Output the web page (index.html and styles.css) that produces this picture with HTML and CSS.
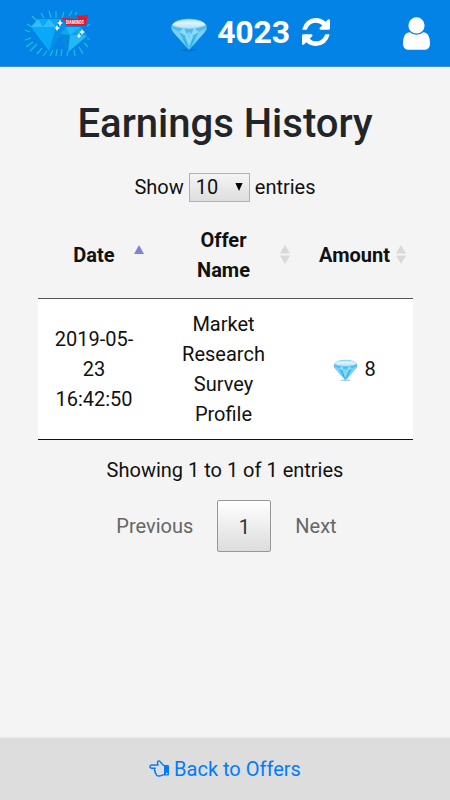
FILE: index.html
```
<!DOCTYPE html>
<html lang="en">
<head>
<meta charset="utf-8">
<title>Earnings History</title>
<link rel="stylesheet" href="styles.css">
</head>
<body>
<svg width="0" height="0" class="defs" aria-hidden="true">
  <defs>
    <linearGradient id="gemTop" x1="0" y1="0" x2="0" y2="1"><stop offset="0" stop-color="#9edcf6"/><stop offset=".4" stop-color="#e0f5fd"/><stop offset="1" stop-color="#a9def7"/></linearGradient>
    <linearGradient id="gemBody" x1="0" y1="0" x2="0" y2="1"><stop offset="0" stop-color="#68b9ed"/><stop offset=".55" stop-color="#43bdf1"/><stop offset="1" stop-color="#0aa6df"/></linearGradient>
    <symbol id="gem" viewBox="0 0 38 34">
      <ellipse cx="19" cy="32" rx="8" ry="1.3" fill="#07559b" opacity=".3"/>
      <path d="M1 9Q3 2 19 1Q35 2 37 9Q37 12 35 14L19 32L3 14Q1 12 1 9Z" fill="url(#gemBody)"/>
      <path d="M2 7Q5 1.500 19 1Q33 1.500 36 7Q32 10 19 11Q6 10 2 7Z" fill="url(#gemTop)" stroke="#71bdf0" stroke-width=".6"/>
      <path d="M2 10L9 14L19 32L4 15ZM36 10L29 14L19 32L34 15Z" fill="#b8e9fc" opacity=".45"/>
      <path d="M9 14L14 10L18 19ZM20 19L24 10L29 14ZM19 32L15 19L19 13L23 19Z" fill="#b9f0ff" opacity=".6"/>
      <path d="M10 15L15 20L19 29M28 15L23 20L19 29M19 12V20" fill="none" stroke="#218fd2" stroke-width=".6" opacity=".5"/>
    </symbol>
  </defs>
</svg>
<header class="topbar">
  <svg class="logo" viewBox="0 0 68 48">
    <path class="rays" d="M14 11L9 6M21 8L18 3M28 8L26 1M33 8V1M39 8L41 2M46 6L49 1M52 5L54 2M9 17L4 14M7 22L2 20M8 28L2 30M10 32L3 37M14 34L7 41M19 38L14 44M24 41L20 46M30 40L27 46M34 39L33 46M39 39L38 46M45 41L44 46M51 40L52 46M56 37L60 44M61 33L65 37M64 29H67M64 16L67 14"/>
    <path fill="#08aaf8" d="M8 17L15 9H36L44 17L26 41Z"/>
    <path fill="#32bcfa" d="M15 9L20 17H8ZM26 9L33 17H20Z"/>
    <path fill="#078ee9" d="M36 9L44 17L26 41L33 17Z"/>
    <path fill="#0ba6ef" d="M37 24L43 17H58L64 26L45 42Z"/>
    <path fill="#20b9f5" d="M43 17L47 25L58 17ZM47 25L45 42L64 26Z"/>
    <path fill="#0789da" d="M37 24L47 25L45 42Z"/>
    <path fill="#e3172d" d="M38 8L55 9L64 9L63 16L43 15L42 11ZM53 6L65 5L64 9L56 9Z"/>
    <text x="43" y="13.900" class="ribbon" textLength="18" lengthAdjust="spacingAndGlyphs">DIAMONDS</text>
    <path fill="#fff" d="M37 9L38 12L40 13L38 14L37 17L36 14L34 13L36 12ZM34 15L35 17L37 18L35 19L34 21L33 19L32 18L33 17ZM59 19L60 21L62 22L60 23L59 25L58 23L56 22L58 21ZM56 23L57 25L58 26L57 27L56 28L55 27L54 26L55 25Z"/>
  </svg>
  <div class="balance">
    <svg class="gem-lg"><use href="#gem"/></svg>
    <strong>4023</strong>
    <svg class="refresh" viewBox="0 128 1536 1536"><path fill="currentColor" d="M1511 1056q0 5-1 7-64 268-268 434.500t-478 166.500q-146 0-282.500-55t-243.500-157l-129 129q-19 19-45 19t-45-19-19-45v-448q0-26 19-45t45-19h448q26 0 45 19t19 45-19 45l-137 137q71 66 161 102t187 36q134 0 250-65t186-179q11-17 53-117 8-23 30-23h192q13 0 22.500 9.500t9.500 22.500zm25-800v448q0 26-19 45t-45 19h-448q-26 0-45-19t-19-45 19-45l138-138q-148-137-349-137-134 0-250 65t-186 179q-11 17-53 117-8 23-30 23h-199q-13 0-22.500-9.500t-9.500-22.500v-7q65-268 270-434.500t480-166.500q146 0 284 55.500t245 156.500l130-129q19-19 45-19t45 19 19 45z"/></svg>
  </div>
  <svg class="user" viewBox="256 128 1280 1536"><path fill="currentColor" d="M1536 1399q0 109-62.500 187t-150.500 78h-854q-88 0-150.500-78t-62.500-187q0-85 8.500-160.500t31.500-152 58.500-131 94-89 134.500-34.500q131 128 313 128t313-128q76 0 134.500 34.500t94 89 58.500 131 31.500 152 8.500 160.500zm-256-887q0 159-112.500 271.500t-271.500 112.500-271.500-112.500-112.500-271.500 112.500-271.500 271.500-112.500 271.500 112.500 112.500 271.500z"/></svg>
</header>
<main>
  <h1>Earnings History</h1>
  <div class="length">Show <span class="select">10<svg viewBox="0 0 8 9"><path d="M0 0H8L4 9Z"/></svg></span> entries</div>
  <table>
    <colgroup><col class="c-date"><col class="c-offer"><col class="c-amount"></colgroup>
    <thead><tr>
      <th><div class="head">Date<svg class="sort" viewBox="0 0 10 19"><path fill="#8080e0" d="M0 9L5 0L10 9Z"/></svg></div></th>
      <th><div class="head">Offer<br>Name<svg class="sort" viewBox="0 0 10 19"><path fill="#d9d9d9" d="M0 8.500L5 0L10 8.500ZM0 10.500H10L5 19Z"/></svg></div></th>
      <th><div class="head">Amount<svg class="sort" viewBox="0 0 10 19"><path fill="#d9d9d9" d="M0 8.500L5 0L10 8.500ZM0 10.500H10L5 19Z"/></svg></div></th>
    </tr></thead>
    <tbody><tr>
      <td>2019-05-<br>23<br>16:42:50</td>
      <td>Market<br>Research<br>Survey<br>Profile</td>
      <td><span class="amount"><svg class="gem-sm" viewBox="0 0 38 34"><use href="#gem" width="38" height="34"/></svg>8</span></td>
    </tr></tbody>
  </table>
  <div class="info">Showing 1 to 1 of 1 entries</div>
  <nav class="pager"><span>Previous</span><span class="current">1</span><span>Next</span></nav>
</main>
<footer>
  <a><svg class="hand" viewBox="0 0 20 17"><path fill="none" stroke="currentColor" stroke-width="1.400" stroke-linejoin="round" d="M15 5.500C12.500 5 11.800 1 9.800 .9C8 .9 8.300 3 9 5H3C.2 5 .2 8.200 3 8.200H6.200C5 9.200 5.300 10.800 6.300 11.200C5.700 12.500 6.200 13.500 7.200 13.800C7.100 15.500 8.200 16 10 16C12.500 16 13 14.800 15 14.600"/><path fill="currentColor" fill-rule="evenodd" d="M15 5H19Q20 5 20 6V14.500Q20 15.500 19 15.500H15ZM17.700 12.800a.8 .8 0 1 0 .01 0Z"/></svg>Back to Offers</a>
</footer>
</body>
</html>
```
FILE: styles.css
```
* { box-sizing: border-box; }
body {
  margin: 0;
  height: 800px;
  display: flex;
  flex-direction: column;
  background: #f4f4f4;
  color: #212529;
  font: 20px/30px Roboto, "Liberation Sans", sans-serif;
  text-align: center;
}
svg { display: block; }
.defs { position: absolute; }
.topbar {
  height: 67px;
  flex: none;
  display: flex;
  align-items: flex-start;
  justify-content: space-between;
  padding: 0 20px 0 23px;
  background: #0383e6;
  border-bottom: 1px solid #3d8fe3;
  color: #fff;
}
.logo { width: 68px; height: 48px; margin-top: 10px; overflow: visible; }
.rays { stroke: #17c3d4; stroke-width: 1.200; fill: none; }
.ribbon { font: bold 4.500px Roboto, sans-serif; fill: #fff; }
.balance { display: flex; margin-left: 6px; }
.gem-lg { width: 38px; height: 34px; margin-top: 18px; }
.balance strong { font-size: 32px; line-height: 38px; margin: 13px 12px 0 9px; letter-spacing: -.2px; }
.refresh { width: 28px; height: 28px; margin-top: 18px; }
.user { width: 27px; height: 33px; margin-top: 17px; }
main { flex: 1; padding: 33px 37.500px 0; color: #111; }
h1 { margin: 0; font-size: 40px; line-height: 48px; font-weight: 500; color: #212529; }
.length { display: flex; justify-content: center; align-items: center; gap: 5px; margin-top: 24px; height: 30px; }
.select {
  width: 61px;
  height: 29px;
  display: flex;
  align-items: center;
  justify-content: space-between;
  padding: 0 6px;
  border: 1px solid #b1b1b1;
  background: linear-gradient(#f4f4f4, #dedede);
}
.select svg { width: 8px; height: 8px; }
table { width: 375px; margin-top: 10px; border-collapse: separate; border-spacing: 0; table-layout: fixed; border-bottom: 1px solid #111; }
.c-date { width: 113px; }
.c-offer { width: 146px; }
.c-amount { width: 116px; }
th { padding: 0; font-weight: 700; border-bottom: 1px solid #555; }
.head { height: 86px; display: grid; place-content: center; position: relative; }
.sort { position: absolute; right: 7px; top: 33px; width: 10px; height: 19px; }
td { padding: 10px; height: 140px; background: #fff; }
.amount { display: flex; justify-content: center; align-items: center; gap: 6px; margin-left: 0; }
.gem-sm { width: 25px; height: 23px; margin-top: 2px; }
.info { margin-top: 15px; }
.pager { display: flex; justify-content: center; align-items: center; margin-top: 15px; gap: 24px; padding-left: 3px; color: #666; }
.current { width: 54px; height: 52px; line-height: 52px; color: #333; border: 1px solid #979797; border-radius: 2px; background: linear-gradient(#fff, #dcdcdc); }
footer { height: 63px; flex: none; display: flex; justify-content: center; background: #ddd; border-top: 1px solid #e8e8e8; padding-top: 16px; color: #007bff; }
footer a { display: flex; gap: 5px; }
.hand { width: 20px; height: 17px; margin-top: 6px; }
```
